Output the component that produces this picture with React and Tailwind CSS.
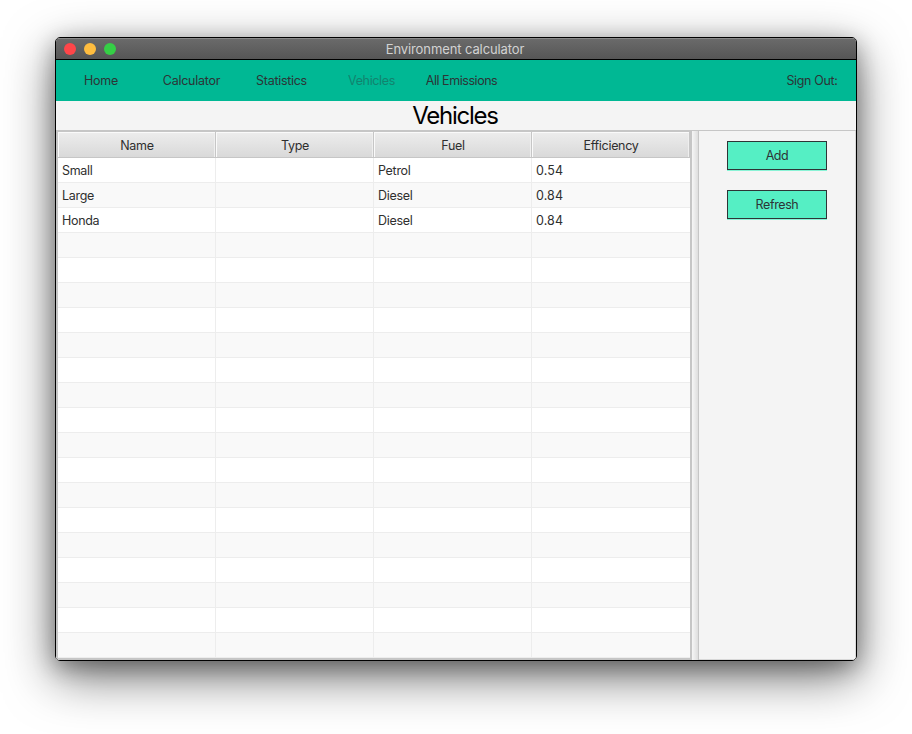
const columns = ["Name", "Type", "Fuel", "Efficiency"];
const vehicles = [
  ["Small", "", "Petrol", "0.54"],
  ["Large", "", "Diesel", "0.84"],
  ["Honda", "", "Diesel", "0.84"],
];
const rows = Array.from({ length: 20 }, (_, i) => vehicles[i] ?? ["", "", "", ""]);
const nav = [
  { label: "Home", tone: "" },
  { label: "Calculator", tone: "tracking-[-0.25px] pl-px" },
  { label: "Statistics", tone: "tracking-[-0.3px] pl-px" },
  { label: "Vehicles", tone: "tracking-[-0.35px] pl-px opacity-40" },
  { label: "All Emissions", tone: "tracking-[-0.45px] pl-px" },
];

function TitleBar() {
  return (
    <div className="relative flex h-[22px] items-center justify-center border-b border-black bg-linear-to-b from-[#6b6b6b] to-[#565656] shadow-[inset_0_1px_0_#8a8a8a]">
      <div className="absolute top-[5px] left-2 flex gap-2">
        <span className="size-3 rounded-full bg-[#ff4649]" />
        <span className="size-3 rounded-full bg-[#ffbd3f]" />
        <span className="size-3 rounded-full bg-[#35cf46]" />
      </div>
      <span className="pt-[2px] pr-[2px] text-[13px] tracking-[-0.1px] text-[#d2d2d2]">Environment calculator</span>
    </div>
  );
}

function NavBar() {
  return (
    <nav className="flex h-[41px] items-center bg-[#00b894] pt-px text-[#2d3436]">
      {nav.map(({ label, tone }) => (
        <span key={label} className={`w-[90px] text-center ${tone}`}>
          {label}
        </span>
      ))}
      <span className="ml-auto w-[88px] text-center tracking-[-0.35px]">Sign Out:</span>
    </nav>
  );
}

function VehicleTable() {
  return (
    <div className="flex w-[636px] flex-col border-2 border-t border-[#c6c6c6] bg-white">
      <div className="grid h-[26px] shrink-0 grid-cols-4 border-b border-[#c6c6c6]">
        {columns.map((c) => (
          <div
            key={c}
            className="flex items-center justify-center border-r border-[#c6c6c6] bg-linear-to-b from-[#ededed] to-[#d9d9d9] pt-[3px] pl-px shadow-[inset_1px_1px_0_#fafafa,inset_-1px_0_0_#efefef]"
          >
            {c}
          </div>
        ))}
      </div>
      {rows.map((r, i) => (
        <div key={i} className="grid h-[25px] shrink-0 grid-cols-4 border-b border-[#ededed] odd:bg-[#f9f9f9] even:bg-white">
          {r.map((v, j) => (
            <div key={j} className="border-r border-[#ededed] pt-[3px] pl-1 leading-[20px] last:border-r-0 last:tracking-[0.1px]">
              {v}
            </div>
          ))}
        </div>
      ))}
    </div>
  );
}

function ActionButton({ children }) {
  return (
    <button className="flex h-[29px] w-[100px] items-center justify-center border border-[#2d3436] bg-[#55efc4] pt-px tracking-[-0.4px] shadow-[0_1px_0_#8af3d6]">
      {children}
    </button>
  );
}

export default function App() {
  return (
    <div className="h-[734px] w-[912px] overflow-hidden bg-white pt-[37px] pl-[55px] font-['Inter','Liberation_Sans',sans-serif] text-[12.5px] tracking-[-0.3px] text-[#2f2f2f]">
      <div className="h-[624px] w-[802px] rounded-[5px] shadow-[0_16px_50px_rgba(0,0,0,0.55),0_6px_22px_rgba(0,0,0,0.32)]">
        <div className="flex h-full flex-col overflow-hidden rounded-[5px] border border-black bg-[#f4f4f4]">
          <TitleBar />
          <NavBar />
          <h1 className="h-[29px] shrink-0 pr-[2px] text-center text-[24px] leading-[30px] tracking-[-1.25px] text-black">Vehicles</h1>
          <div className="flex min-h-0 grow border-t border-[#c6c6c6]">
            <VehicleTable />
            <div className="w-[7px] border-r border-[#c6c6c6] bg-linear-to-r from-[#f6f6f6] to-[#dedede]" />
            <aside className="flex grow flex-col items-center gap-5 border-r border-b border-[#d8d8d8] pt-[10px] text-[#2d3436]">
              <ActionButton>Add</ActionButton>
              <ActionButton>Refresh</ActionButton>
            </aside>
          </div>
        </div>
      </div>
    </div>
  );
}
